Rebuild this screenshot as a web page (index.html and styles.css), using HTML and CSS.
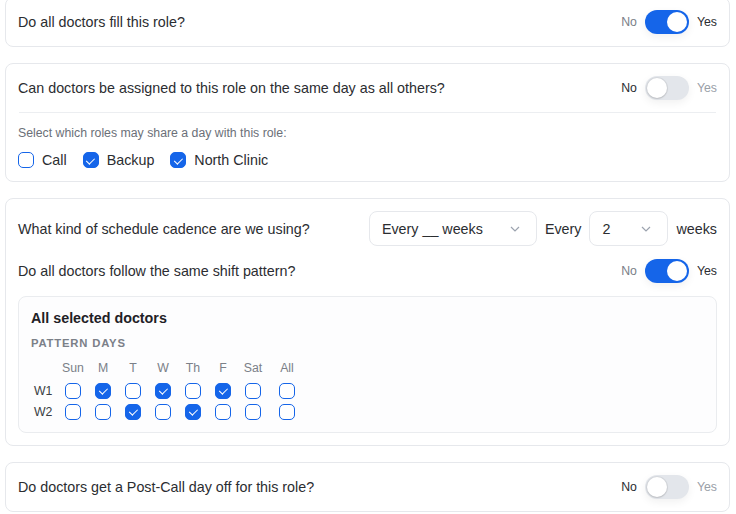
FILE: index.html
```html
<!DOCTYPE html>
<html>
<head>
<meta charset="utf-8">
<link rel="stylesheet" href="styles.css">
</head>
<body>
<div class="page">
  <section class="card">
    <div class="row">
      <span class="q">Do all doctors fill this role?</span>
      <div class="switch-group on">
        <span class="sw-no">No</span>
        <span class="switch"><span class="knob"></span></span>
        <span class="sw-yes">Yes</span>
      </div>
    </div>
  </section>

  <section class="card">
    <div class="row">
      <span class="q">Can doctors be assigned to this role on the same day as all others?</span>
      <div class="switch-group">
        <span class="sw-no">No</span>
        <span class="switch"><span class="knob"></span></span>
        <span class="sw-yes">Yes</span>
      </div>
    </div>
    <div class="divider"></div>
    <div class="sub">Select which roles may share a day with this role:</div>
    <div class="roles">
      <label class="role"><span class="cb"></span>Call</label>
      <label class="role"><span class="cb checked"></span>Backup</label>
      <label class="role"><span class="cb checked"></span>North Clinic</label>
    </div>
  </section>

  <section class="card">
    <div class="row">
      <span class="q">What kind of schedule cadence are we using?</span>
      <div class="cadence">
        <div class="select wide"><span>Every __ weeks</span><svg class="chev" width="10" height="6" viewBox="0 0 10 6"><path d="M1 1l4 4 4-4" fill="none" stroke="#9ca3af" stroke-width="1.2"/></svg></div>
        <span class="word">Every</span>
        <div class="select narrow"><span>2</span><svg class="chev" width="10" height="6" viewBox="0 0 10 6"><path d="M1 1l4 4 4-4" fill="none" stroke="#9ca3af" stroke-width="1.2"/></svg></div>
        <span class="word">weeks</span>
      </div>
    </div>
    <div class="row row2">
      <span class="q">Do all doctors follow the same shift pattern?</span>
      <div class="switch-group on">
        <span class="sw-no">No</span>
        <span class="switch"><span class="knob"></span></span>
        <span class="sw-yes">Yes</span>
      </div>
    </div>
    <div class="inner">
      <div class="inner-title">All selected doctors</div>
      <div class="inner-label">PATTERN DAYS</div>
      <div class="grid">
        <span></span>
        <span class="hd">Sun</span><span class="hd">M</span><span class="hd">T</span><span class="hd">W</span><span class="hd">Th</span><span class="hd">F</span><span class="hd">Sat</span><span class="hd">All</span>
        <span class="wk">W1</span>
        <span class="cell"><span class="cb"></span></span>
        <span class="cell"><span class="cb checked"></span></span>
        <span class="cell"><span class="cb"></span></span>
        <span class="cell"><span class="cb checked"></span></span>
        <span class="cell"><span class="cb"></span></span>
        <span class="cell"><span class="cb checked"></span></span>
        <span class="cell"><span class="cb"></span></span>
        <span class="cell"><span class="cb"></span></span>
        <span class="wk">W2</span>
        <span class="cell"><span class="cb"></span></span>
        <span class="cell"><span class="cb"></span></span>
        <span class="cell"><span class="cb checked"></span></span>
        <span class="cell"><span class="cb"></span></span>
        <span class="cell"><span class="cb checked"></span></span>
        <span class="cell"><span class="cb"></span></span>
        <span class="cell"><span class="cb"></span></span>
        <span class="cell"><span class="cb"></span></span>
      </div>
    </div>
  </section>

  <section class="card">
    <div class="row">
      <span class="q">Do doctors get a Post-Call day off for this role?</span>
      <div class="switch-group">
        <span class="sw-no">No</span>
        <span class="switch"><span class="knob"></span></span>
        <span class="sw-yes">Yes</span>
      </div>
    </div>
  </section>
</div>
</body>
</html>
```

FILE: styles.css
```css
* { box-sizing: border-box; }
html, body { margin: 0; padding: 0; background: #ffffff; }
body {
  font-family: "Liberation Sans", Arial, sans-serif;
  color: #2b2d31;
  overflow: hidden;
}
.page {
  display: flex;
  flex-direction: column;
  gap: 16px;
  padding: 0 6px 0 5px;
  margin-top: -3px;
}
.card {
  border: 1px solid #e6e8ec;
  border-radius: 8px;
  background: #fff;
  padding: 12px;
}
.row {
  display: flex;
  align-items: center;
  justify-content: space-between;
  min-height: 24px;
}
.q { font-size: 14.3px; line-height: 18px; }
.switch-group {
  display: flex;
  align-items: center;
  gap: 8px;
  font-size: 12.3px;
}
.sw-no { color: #2b2d31; }
.sw-yes { color: #9aa0a8; }
.switch-group.on .sw-no { color: #7b8088; }
.switch-group.on .sw-yes { color: #2b2d31; }
.switch {
  width: 44px;
  height: 24px;
  border-radius: 12px;
  background: #e3e6eb;
  position: relative;
  box-shadow: 0 3px 8px rgba(0,0,0,0.06);
}
.knob {
  position: absolute;
  top: 2px;
  left: 2px;
  width: 20px;
  height: 20px;
  border-radius: 50%;
  background: #fff;
  box-shadow: 0 0 0 1px rgba(0,0,0,0.06), 0 1px 2px rgba(0,0,0,0.12);
}
.switch-group.on .switch { background: #1565e9; }
.switch-group.on .knob { left: 22px; box-shadow: none; }
.divider {
  height: 1px;
  background: #eceef1;
  margin: 12px 1px 0 1px;
}
.sub {
  font-size: 12.3px;
  line-height: 16px;
  color: #6b7078;
  margin-top: 12px;
}
.roles {
  display: flex;
  gap: 16px;
  margin-top: 10px;
  height: 18px;
  align-items: center;
}
.role {
  display: flex;
  align-items: center;
  gap: 8px;
  font-size: 14.3px;
}
.cb {
  display: inline-block;
  width: 16px;
  height: 16px;
  border: 1.5px solid #1565e9;
  border-radius: 5px;
  background: #fff;
  position: relative;
  flex: none;
}
.cb.checked { background: #1565e9; }
.cb.checked::after {
  content: "";
  position: absolute;
  left: 4.5px;
  top: 2.5px;
  width: 3.5px;
  height: 7px;
  border: solid #fff;
  border-width: 0 1.5px 1.5px 0;
  transform: rotate(45deg);
}
.cadence {
  display: flex;
  align-items: center;
  gap: 8px;
}
.select {
  height: 35px;
  border: 1px solid #e6e8ec;
  border-radius: 8px;
  display: flex;
  align-items: center;
  justify-content: space-between;
  padding: 0 16px 0 12px;
  font-size: 14.3px;
}
.select.wide { width: 168px; }
.select.narrow { width: 79px; }
.word { font-size: 14.3px; }
.row2 { margin-top: 13px; }
.inner {
  margin-top: 13px;
  border: 1px solid #eaecef;
  border-radius: 8px;
  background: #fdfdfe;
  padding: 12px 12px 10px;
}
.inner-title {
  font-size: 14.3px;
  font-weight: bold;
  line-height: 18px;
  color: #1f2126;
}
.inner-label {
  margin-top: 9px;
  font-size: 11.3px;
  font-weight: bold;
  line-height: 14px;
  color: #7b8088;
  letter-spacing: 0.8px;
}
.grid {
  display: grid;
  grid-template-columns: 27px repeat(7, 30px) 38px;
  grid-template-rows: 19px 21px 21px;
  margin-top: 11px;
  align-items: center;
}
.hd {
  font-size: 12.3px;
  color: #7b8088;
  text-align: center;
  align-self: start;
}
.wk {
  font-size: 12.3px;
  color: #3a3d43;
  padding-left: 3px;
}
.cell {
  display: flex;
  justify-content: center;
  align-items: center;
}
```
